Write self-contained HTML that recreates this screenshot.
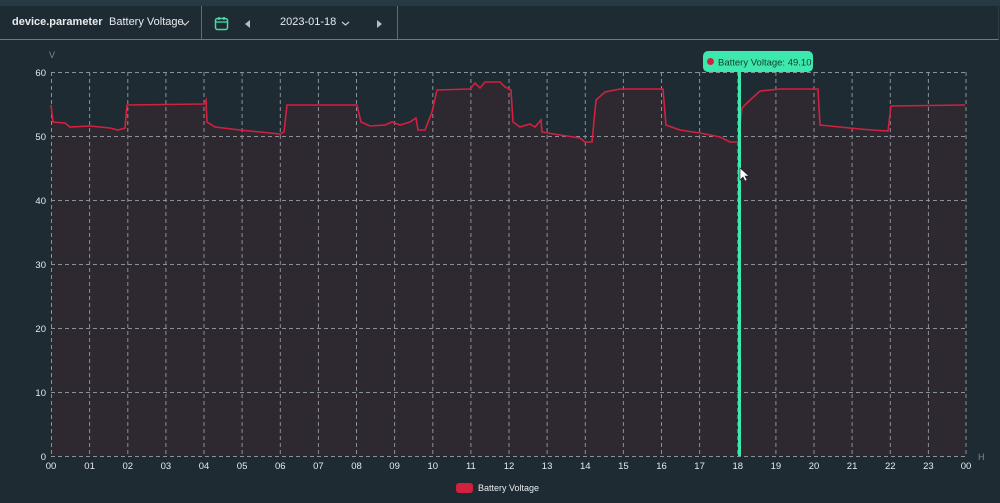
<!DOCTYPE html>
<html><head><meta charset="utf-8"><style>
html,body{margin:0;padding:0;width:1000px;height:503px;overflow:hidden;background:#1f2b33;font-family:"Liberation Sans",sans-serif;}
.top{position:absolute;left:0;top:0;width:1000px;height:6px;background:#263a43;}
.hdr{position:absolute;left:0;top:6px;width:998px;height:33px;background:#1f2b33;border-bottom:1px solid #6d7a80;border-right:1px solid #2c3a42;}
.t{position:absolute;color:#e8ecee;font-size:11px;top:10px;}
.sep{position:absolute;top:0;width:1px;height:33px;background:#5f6d73;}
</style></head><body>
<div class="top"></div>
<div class="hdr">
<span class="t" style="left:12px;font-weight:bold;">device.parameter</span>
<span class="t" style="left:109px;">Battery Voltage</span>
<svg style="position:absolute;left:181px;top:14px" width="10" height="8"><path d="M1 2 L4 5 L8 1" stroke="#ccc" fill="none" stroke-width="1.2"/></svg>
<div class="sep" style="left:201px"></div>
<svg style="position:absolute;left:214px;top:10px" width="15" height="15" viewBox="0 0 15 15"><rect x="1.5" y="2.5" width="12" height="11" rx="2" fill="none" stroke="#3fe0a8" stroke-width="1.5"/><line x1="1.5" y1="6" x2="13.5" y2="6" stroke="#3fe0a8" stroke-width="1.3"/><line x1="5" y1="1" x2="5" y2="4" stroke="#3fe0a8" stroke-width="1.5"/><line x1="10" y1="1" x2="10" y2="4" stroke="#3fe0a8" stroke-width="1.5"/></svg>
<svg style="position:absolute;left:245px;top:14px" width="6" height="8"><path d="M5 0 L0 4 L5 8Z" fill="#bbb"/></svg>
<span class="t" style="left:280px;">2023-01-18</span>
<svg style="position:absolute;left:341px;top:14px" width="9" height="8"><path d="M1 2 L4.5 5 L8 2" stroke="#ccc" fill="none" stroke-width="1.2"/></svg>
<svg style="position:absolute;left:377px;top:14px" width="6" height="8"><path d="M0 0 L5 4 L0 8Z" fill="#bbb"/></svg>
<div class="sep" style="left:397px"></div>
</div>
<svg style="position:absolute;left:0;top:0" width="1000" height="503" viewBox="0 0 1000 503">
<rect x="51" y="72" width="915" height="384" fill="#1f2b33"/>
<path d="M51,105 L53,122 L65,123 L70,127 L90,126 L110,128 L118,130 L125,128 L127,105 L204,104 L206,100 L207,122 L215,127 L240,130 L260,132 L280,134 L284,132 L287,105 L357,105 L361,122 L370,126 L385,125 L392,122 L400,125 L410,122 L416,118 L418,130 L425,130 L432,112 L437,90 L470,89 L475,83 L480,88 L485,82 L500,82 L505,87 L511,90 L513,122 L520,127 L530,124 L535,127 L541,120 L542,132 L560,135 L580,138 L585,142 L592,142 L596,100 L605,92 L620,89 L663,89 L666,125 L680,130 L700,133 L720,137 L730,142 L738,142 L742,108 L748,102 L760,91 L780,89 L818,89 L820,125 L840,127 L860,129 L872,130 L888,131 L891,106 L965,105 L965,456 L51,456Z" fill="#2e2830"/>
<g stroke="#8a9197" stroke-width="1" stroke-dasharray="4,3" fill="none">
<line x1="51" y1="72.5" x2="966" y2="72.5"/><line x1="51" y1="136.5" x2="966" y2="136.5"/><line x1="51" y1="200.5" x2="966" y2="200.5"/><line x1="51" y1="264.5" x2="966" y2="264.5"/><line x1="51" y1="328.5" x2="966" y2="328.5"/><line x1="51" y1="392.5" x2="966" y2="392.5"/><line x1="51" y1="456.5" x2="966" y2="456.5"/>
<line x1="51.5" y1="72" x2="51.5" y2="456"/><line x1="89.6" y1="72" x2="89.6" y2="456"/><line x1="127.8" y1="72" x2="127.8" y2="456"/><line x1="165.9" y1="72" x2="165.9" y2="456"/><line x1="204" y1="72" x2="204" y2="456"/><line x1="242.1" y1="72" x2="242.1" y2="456"/><line x1="280.3" y1="72" x2="280.3" y2="456"/><line x1="318.4" y1="72" x2="318.4" y2="456"/><line x1="356.5" y1="72" x2="356.5" y2="456"/><line x1="394.6" y1="72" x2="394.6" y2="456"/><line x1="432.8" y1="72" x2="432.8" y2="456"/><line x1="470.9" y1="72" x2="470.9" y2="456"/><line x1="509" y1="72" x2="509" y2="456"/><line x1="547.1" y1="72" x2="547.1" y2="456"/><line x1="585.3" y1="72" x2="585.3" y2="456"/><line x1="623.4" y1="72" x2="623.4" y2="456"/><line x1="661.5" y1="72" x2="661.5" y2="456"/><line x1="699.6" y1="72" x2="699.6" y2="456"/><line x1="737.8" y1="72" x2="737.8" y2="456"/><line x1="775.9" y1="72" x2="775.9" y2="456"/><line x1="814" y1="72" x2="814" y2="456"/><line x1="852.1" y1="72" x2="852.1" y2="456"/><line x1="890.3" y1="72" x2="890.3" y2="456"/><line x1="928.4" y1="72" x2="928.4" y2="456"/><line x1="966" y1="72" x2="966" y2="456"/>
</g>
<path d="M51,105 L53,122 L65,123 L70,127 L90,126 L110,128 L118,130 L125,128 L127,105 L204,104 L206,100 L207,122 L215,127 L240,130 L260,132 L280,134 L284,132 L287,105 L357,105 L361,122 L370,126 L385,125 L392,122 L400,125 L410,122 L416,118 L418,130 L425,130 L432,112 L437,90 L470,89 L475,83 L480,88 L485,82 L500,82 L505,87 L511,90 L513,122 L520,127 L530,124 L535,127 L541,120 L542,132 L560,135 L580,138 L585,142 L592,142 L596,100 L605,92 L620,89 L663,89 L666,125 L680,130 L700,133 L720,137 L730,142 L738,142 L742,108 L748,102 L760,91 L780,89 L818,89 L820,125 L840,127 L860,129 L872,130 L888,131 L891,106 L965,105" fill="none" stroke="#d3203f" stroke-width="1.6"/>
<line x1="739.5" y1="70" x2="739.5" y2="456" stroke="#3de8ad" stroke-width="3"/>
<rect x="703" y="51" width="110" height="21" rx="5" fill="#3de8ad"/>
<circle cx="710.5" cy="61.5" r="3.5" fill="#d3203f"/>
<text x="718" y="65.5" font-size="9.5" fill="#1a3a34" font-family="Liberation Sans,sans-serif">Battery Voltage: 49.10</text>
<path d="M740,168 L740,180 L743,177 L745,181 L747,180 L745,176 L749,176Z" fill="#fff" stroke="#222" stroke-width="0.6"/>
<g font-size="9.5" fill="#e6eaec" font-family="Liberation Sans,sans-serif" text-anchor="end">
<text x="46" y="76">60</text><text x="46" y="140">50</text><text x="46" y="204">40</text><text x="46" y="268">30</text><text x="46" y="332">20</text><text x="46" y="396">10</text><text x="46" y="460">0</text>
</g>
<text x="49" y="58" font-size="9" fill="#7d888e" font-family="Liberation Sans,sans-serif">V</text>
<text x="978" y="460" font-size="9" fill="#7d888e" font-family="Liberation Sans,sans-serif">H</text>
<g font-size="9.5" fill="#e6eaec" font-family="Liberation Sans,sans-serif" text-anchor="middle">
<text x="51" y="469">00</text><text x="89.6" y="469">01</text><text x="127.8" y="469">02</text><text x="165.9" y="469">03</text><text x="204" y="469">04</text><text x="242.1" y="469">05</text><text x="280.3" y="469">06</text><text x="318.4" y="469">07</text><text x="356.5" y="469">08</text><text x="394.6" y="469">09</text><text x="432.8" y="469">10</text><text x="470.9" y="469">11</text><text x="509" y="469">12</text><text x="547.1" y="469">13</text><text x="585.3" y="469">14</text><text x="623.4" y="469">15</text><text x="661.5" y="469">16</text><text x="699.6" y="469">17</text><text x="737.8" y="469">18</text><text x="775.9" y="469">19</text><text x="814" y="469">20</text><text x="852.1" y="469">21</text><text x="890.3" y="469">22</text><text x="928.4" y="469">23</text><text x="966" y="469">00</text>
</g>
<rect x="456" y="483" width="17" height="10" rx="3" fill="#d3203f"/>
<text x="478" y="491" font-size="9" fill="#e6eaec" font-family="Liberation Sans,sans-serif">Battery Voltage</text>
</svg>
</body></html>
